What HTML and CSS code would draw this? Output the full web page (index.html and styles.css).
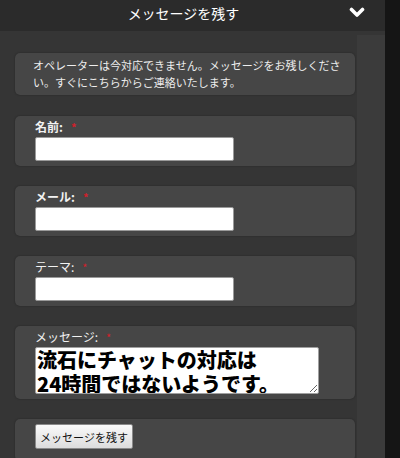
FILE: index.html
```html
<!DOCTYPE html>
<html lang="ja">
<head>
<meta charset="utf-8">
<title>メッセージを残す</title>
<link rel="stylesheet" href="styles.css">
</head>
<body>
<div class="widget">
  <div class="header">
    <div class="title">メッセージを残す</div>
    <svg class="chevron" width="16" height="12" viewBox="0 0 16 12"><polyline points="2.5,2.5 8,8 13.5,2.5" fill="none" stroke="#fff" stroke-width="3.6" stroke-linecap="round" stroke-linejoin="round"/></svg>
  </div>
  <div class="body">
    <div class="main">
      <div class="box info">オペレーターは今対応できません。メッセージをお残しください。すぐにこちらからご連絡いたします。</div>
      <div class="box field">
        <label class="lbl bold">名前:<span class="req">*</span></label>
        <input class="text" type="text">
      </div>
      <div class="box field">
        <label class="lbl bold">メール:<span class="req">*</span></label>
        <input class="text" type="text">
      </div>
      <div class="box field">
        <label class="lbl">テーマ:<span class="req">*</span></label>
        <input class="text" type="text">
      </div>
      <div class="box field">
        <label class="lbl">メッセージ:<span class="req">*</span></label>
        <textarea class="msg">流石にチャットの対応は
24時間ではないようです。</textarea>
      </div>
      <div class="box field submit">
        <button class="btn" type="button">メッセージを残す</button>
      </div>
    </div>
    <div class="side"></div>
  </div>
</div>
</body>
</html>
```

FILE: styles.css
```css
html, body {
  margin: 0;
  padding: 0;
  background: #151515;
  height: 100%;
  overflow: hidden;
  font-family: "Noto Sans CJK JP", "Noto Sans", sans-serif;
}
.widget {
  width: 385px;
  height: 100%;
  background: #353535;
  display: flex;
  flex-direction: column;
}
.header {
  height: 31px;
  flex: none;
  background: #2b2b2b;
  display: flex;
  align-items: flex-start;
  padding-left: 18px;
}
.title {
  flex: 1;
  text-align: center;
  color: #fff;
  font-size: 14px;
  line-height: 27px;
}
.chevron {
  margin: 7px 20px 0 0;
  flex: none;
}
.body {
  flex: 1;
  min-height: 0;
  display: flex;
}
.main {
  width: 357px;
  padding-top: 22px;
  overflow: hidden;
}
.side {
  flex: 1;
  margin-top: 4px;
  background: #3b3b3b;
}
.box {
  width: 340px;
  box-sizing: border-box;
  margin: 0 0 20px 15px;
  background: #464646;
  border-radius: 5px;
  box-shadow: 0 0 2px rgba(0, 0, 0, 0.35);
}
.info {
  margin-bottom: 21px;
  padding: 4px 12px 4px 18px;
  color: #eee;
  font-size: 11px;
  line-height: 17px;
}
.field {
  padding: 2px 12px 5px 20px;
}
.lbl {
  display: block;
  height: 18px;
  line-height: 18px;
  font-size: 12px;
  color: #f2f2f2;
}
.bold {
  font-weight: bold;
}
.req {
  color: #d21f2b;
  font-size: 11px;
  margin-left: 8px;
}
.text {
  display: block;
  margin: 1px 0 0 0;
  width: 199px;
  height: 24px;
  box-sizing: border-box;
  border: 1px solid #9a9a9a;
  border-radius: 2px;
  background: #fff;
  padding: 0 3px;
}
.msg {
  display: block;
  margin: 1px 0 0 0;
  width: 284px;
  height: 47px;
  box-sizing: border-box;
  border: 1px solid #a0a0a0;
  border-radius: 2px;
  background: #fff;
  padding: 0 1px;
  overflow: hidden;
  font-family: "Noto Sans CJK JP", sans-serif;
  font-weight: 900;
  font-size: 20px;
  line-height: 24px;
  color: #000;
}
.submit {
  padding-top: 5px;
  padding-bottom: 12px;
}
.btn {
  display: block;
  width: 98px;
  height: 25px;
  padding: 0 4px;
  border: 1px solid #8a8a8a;
  border-radius: 2px;
  background: linear-gradient(#fafafa, #dcdcdc);
  font-family: "Noto Sans CJK JP", sans-serif;
  font-size: 11px;
  color: #111;
}
```
